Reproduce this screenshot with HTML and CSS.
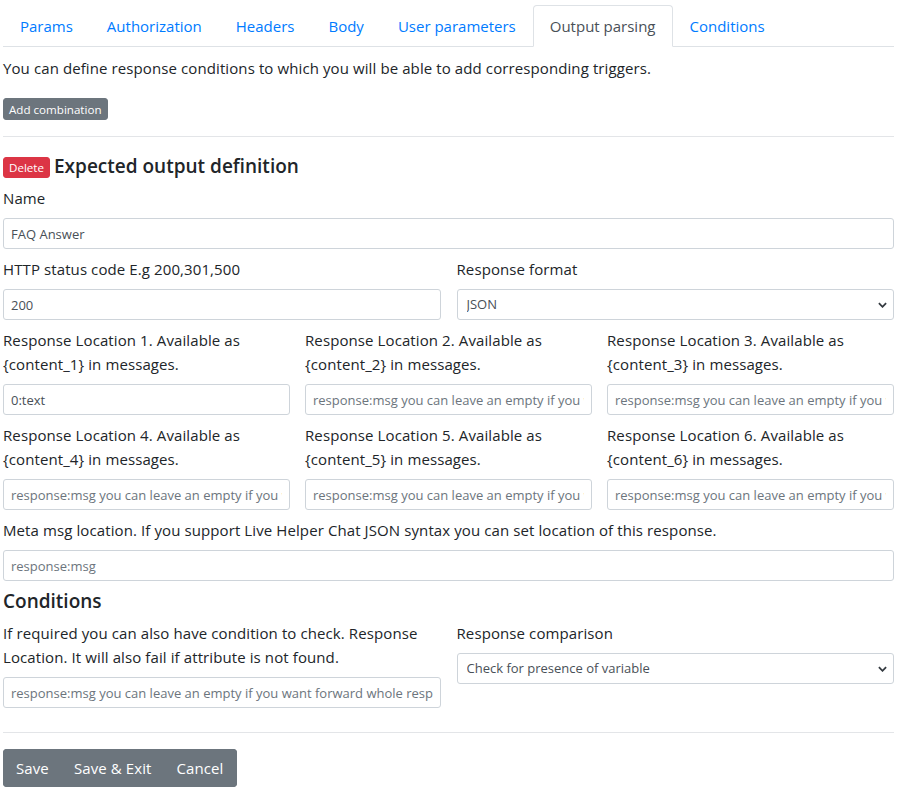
FILE: index.html
```html
<!DOCTYPE html>
<html>
<head>
<meta charset="utf-8">
<link rel="stylesheet" href="styles.css">
</head>
<body>
<div class="page">
  <ul class="nav-tabs">
    <li><a class="tab">Params</a></li>
    <li><a class="tab">Authorization</a></li>
    <li><a class="tab">Headers</a></li>
    <li><a class="tab">Body</a></li>
    <li><a class="tab">User parameters</a></li>
    <li><a class="tab active">Output parsing</a></li>
    <li><a class="tab">Conditions</a></li>
  </ul>
  <div class="tab-content">
    <p class="intro">You can define response conditions to which you will be able to add corresponding triggers.</p>
    <button class="btn-xs btn-secondary btn-block-start">Add combination</button>
    <hr class="divider">
    <h4 class="section-title"><button class="btn-xs btn-danger">Delete</button> Expected output definition</h4>

    <div class="form-group">
      <label class="label">Name</label>
      <input class="form-control" type="text" value="FAQ Answer">
    </div>

    <div class="row-2">
      <div class="form-group">
        <label class="label">HTTP status code E.g 200,301,500</label>
        <input class="form-control" type="text" value="200">
      </div>
      <div class="form-group">
        <label class="label">Response format</label>
        <select class="form-control select"><option>JSON</option></select>
      </div>
    </div>

    <div class="row-3">
      <div class="form-group">
        <label class="label">Response Location 1. Available as {content_1} in messages.</label>
        <input class="form-control" type="text" value="0:text">
      </div>
      <div class="form-group">
        <label class="label">Response Location 2. Available as {content_2} in messages.</label>
        <input class="form-control" type="text" placeholder="response:msg you can leave an empty if you want forward whole response">
      </div>
      <div class="form-group">
        <label class="label">Response Location 3. Available as {content_3} in messages.</label>
        <input class="form-control" type="text" placeholder="response:msg you can leave an empty if you want forward whole response">
      </div>
    </div>

    <div class="row-3">
      <div class="form-group">
        <label class="label">Response Location 4. Available as {content_4} in messages.</label>
        <input class="form-control" type="text" placeholder="response:msg you can leave an empty if you want forward whole response">
      </div>
      <div class="form-group">
        <label class="label">Response Location 5. Available as {content_5} in messages.</label>
        <input class="form-control" type="text" placeholder="response:msg you can leave an empty if you want forward whole response">
      </div>
      <div class="form-group">
        <label class="label">Response Location 6. Available as {content_6} in messages.</label>
        <input class="form-control" type="text" placeholder="response:msg you can leave an empty if you want forward whole response">
      </div>
    </div>

    <div class="form-group">
      <label class="label">Meta msg location. If you support Live Helper Chat JSON syntax you can set location of this response.</label>
      <input class="form-control" type="text" placeholder="response:msg">
    </div>

    <h4 class="section-title">Conditions</h4>

    <div class="row-2">
      <div class="form-group">
        <label class="label">If required you can also have condition to check. Response Location. It will also fail if attribute is not found.</label>
        <input class="form-control" type="text" placeholder="response:msg you can leave an empty if you want forward whole response">
      </div>
      <div class="form-group">
        <label class="label">Response comparison</label>
        <select class="form-control select"><option>Check for presence of variable</option></select>
      </div>
    </div>

    <hr class="divider divider-bottom">

    <div class="btn-group">
      <button class="btn btn-secondary">Save</button>
      <button class="btn btn-secondary">Save &amp; Exit</button>
      <button class="btn btn-secondary">Cancel</button>
    </div>
  </div>
</div>
</body>
</html>
```

FILE: styles.css
```css
* { box-sizing: border-box; }
html, body { margin: 0; padding: 0; background: #fff; }
body {
  font-family: "Open Sans", "Noto Sans", "Liberation Sans", sans-serif;
  font-size: 15px;
  line-height: 24px;
  color: #212529;
}
.page { padding: 5px 4px 0 3px; }

.nav-tabs {
  display: flex;
  list-style: none;
  margin: 0;
  padding: 0;
  border-bottom: 1px solid #dee2e6;
}
.nav-tabs li { margin-bottom: -1px; }
.tab {
  display: block;
  padding: 8px 16px;
  border: 1px solid transparent;
  border-top-left-radius: 4px;
  border-top-right-radius: 4px;
  color: #007bff;
  line-height: 24px;
}
.tab.active {
  color: #495057;
  background: #fff;
  border-color: #dee2e6 #dee2e6 #fff;
}

.tab-content { padding-top: 9px; }
.intro { margin: 0 0 18px 0; letter-spacing: 0.1px; }

.btn-xs {
  font-family: inherit;
  font-size: 11.6px;
  line-height: 17px;
  padding: 1px 5px;
  border: 1px solid transparent;
  border-radius: 3px;
  color: #fff;
  display: inline-block;
  vertical-align: middle;
}
.btn-block-start { display: block; height: 22px; }
.btn-secondary { background: #6c757d; border-color: #6c757d; color: #fff; }
.btn-danger { background: #dc3545; border-color: #dc3545; color: #fff; }

.divider {
  border: 0;
  border-top: 1px solid #e3e5e8;
  margin: 16px 0 17px 0;
}
.divider-bottom { margin-top: 16px; margin-bottom: 16px; }

.section-title {
  font-size: 19px;
  font-weight: 600;
  line-height: 24px;
  margin: 0 0 8px 0;
  display: flex;
  align-items: center;
  gap: 4px;
}
.section-title .btn-xs { margin-top: 3px; }

.form-group { margin-bottom: 8px; min-width: 0; }
.label { display: block; margin-bottom: 8px; letter-spacing: 0.1px; }

.form-control {
  display: block;
  width: 100%;
  height: 31px;
  padding: 4px 7px;
  font-family: inherit;
  font-size: 13px;
  line-height: 21px;
  color: #495057;
  background: #fff;
  border: 1px solid #ced4da;
  border-radius: 3px;
  outline: none;
}
.form-control::placeholder { color: #6c757d; opacity: 1; }
.select {
  appearance: none;
  -webkit-appearance: none;
  padding-left: 9px;
  padding-right: 24px;
  background-image: url("data:image/svg+xml,%3csvg xmlns='http://www.w3.org/2000/svg' width='10' height='6' viewBox='0 0 10 6'%3e%3cpath d='M1 1l4 4 4-4' fill='none' stroke='%23343a40' stroke-width='2'/%3e%3c/svg%3e");
  background-repeat: no-repeat;
  background-position: right 6px center;
  background-size: 9px 6px;
}

.row-2 { display: grid; grid-template-columns: 1fr 1fr; column-gap: 16px; }
.row-3 { display: grid; grid-template-columns: 1fr 1fr 1fr; column-gap: 15px; }

.btn-group { display: inline-flex; border-radius: 4px; overflow: hidden; }
.btn {
  font-family: inherit;
  font-size: 15px;
  line-height: 24px;
  padding: 6px 12px;
  border: 1px solid #6c757d;
  margin: 0;
  letter-spacing: 0.1px;
}
.btn-group .btn + .btn { margin-left: -1px; }
```
